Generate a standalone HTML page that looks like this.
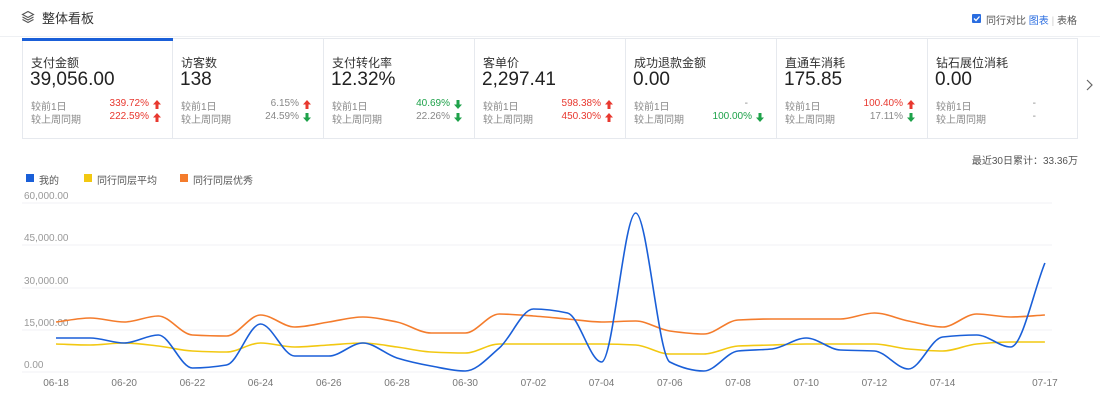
<!DOCTYPE html>
<html><head><meta charset="utf-8"><style>
*{margin:0;padding:0;box-sizing:border-box}
body{width:1100px;height:414px;background:#fff;font-family:"Liberation Sans","Noto Sans CJK SC",sans-serif;color:#333;position:relative;overflow:hidden}
.abs{position:absolute}
.card{position:absolute;top:38px;height:101px;width:151px;border:1px solid #e6e9ee;border-left:none;background:#fff}
.card .t{position:absolute;left:8px;top:15px;font-size:12px;color:#333}
.card .v{position:absolute;left:7px;top:30px;font-size:19px;color:#222}
.card .r{position:absolute;left:8px;font-size:10px;color:#888;width:130px}
.card .r span.p{position:absolute;right:12px}
.card .r svg{position:absolute;right:0;top:2px}
.red{color:#e8382f}.grn{color:#1ea24a}
.lbl{position:absolute;font-size:10px;color:#999}
.xl{position:absolute;top:378px;font-size:10px;color:#777;width:40px;text-align:center}
</style></head><body>
<svg class="abs" style="left:21px;top:10px" width="14" height="14" viewBox="0 0 14 14" fill="none" stroke="#555" stroke-width="1.1"><path d="M7 1.5L12.5 4.5 7 7.5 1.5 4.5z"/><path d="M1.5 7L7 10 12.5 7"/><path d="M1.5 9.5L7 12.5 12.5 9.5"/></svg>
<div class="abs" style="left:42px;top:8px;font-size:13px;color:#333">整体看板</div>
<div class="abs" style="left:972px;top:14px;width:9px;height:9px;background:#2a6de0;border-radius:1px"></div>
<svg class="abs" style="left:972px;top:14px" width="9" height="9"><path d="M2 4.5L4 6.5 7.5 2.5" stroke="#fff" fill="none" stroke-width="1.3"/></svg>
<div class="abs" style="left:986px;top:12px;font-size:10px;color:#555">同行对比 <span style="color:#2a6de0">图表</span> <span style="color:#ccc">|</span> 表格</div>
<div class="abs" style="left:0;top:36px;width:1100px;height:1px;background:#eef0f3"></div>

<svg width="0" height="0" style="position:absolute"><defs>
<symbol id="up" viewBox="0 0 8 9"><path d="M4 0L8 4.5H5.5V9H2.5V4.5H0z"/></symbol>
<symbol id="dn" viewBox="0 0 8 9"><path d="M4 9L8 4.5H5.5V0H2.5V4.5H0z"/></symbol></defs></svg>

<div class="card" style="left:22px;border-left:1px solid #e6e9ee"><div class="abs" style="left:-1px;top:-1px;width:152px;height:3px;background:#1a5fd8"></div><div class="t">支付金额</div><div class="v">39,056.00</div>
<div class="r" style="top:59px">较前1日<span class="p red">339.72%</span><svg width="8" height="9" fill="#e8382f"><use href="#up"/></svg></div><div class="r" style="top:72px">较上周同期<span class="p red">222.59%</span><svg width="8" height="9" fill="#e8382f"><use href="#up"/></svg></div></div>
<div class="card" style="left:173px"><div class="t">访客数</div><div class="v">138</div>
<div class="r" style="top:59px">较前1日<span class="p">6.15%</span><svg width="8" height="9" fill="#e8382f"><use href="#up"/></svg></div><div class="r" style="top:72px">较上周同期<span class="p">24.59%</span><svg width="8" height="9" fill="#1ea24a"><use href="#dn"/></svg></div></div>
<div class="card" style="left:324px"><div class="t">支付转化率</div><div class="v">12.32%</div>
<div class="r" style="top:59px">较前1日<span class="p grn">40.69%</span><svg width="8" height="9" fill="#1ea24a"><use href="#dn"/></svg></div><div class="r" style="top:72px">较上周同期<span class="p">22.26%</span><svg width="8" height="9" fill="#1ea24a"><use href="#dn"/></svg></div></div>
<div class="card" style="left:475px"><div class="t">客单价</div><div class="v">2,297.41</div>
<div class="r" style="top:59px">较前1日<span class="p red">598.38%</span><svg width="8" height="9" fill="#e8382f"><use href="#up"/></svg></div><div class="r" style="top:72px">较上周同期<span class="p red">450.30%</span><svg width="8" height="9" fill="#e8382f"><use href="#up"/></svg></div></div>
<div class="card" style="left:626px"><div class="t">成功退款金额</div><div class="v">0.00</div>
<div class="r" style="top:59px">较前1日<span class="p" style="right:16px">-</span></div><div class="r" style="top:72px">较上周同期<span class="p grn">100.00%</span><svg width="8" height="9" fill="#1ea24a"><use href="#dn"/></svg></div></div>
<div class="card" style="left:777px"><div class="t">直通车消耗</div><div class="v">175.85</div>
<div class="r" style="top:59px">较前1日<span class="p red">100.40%</span><svg width="8" height="9" fill="#e8382f"><use href="#up"/></svg></div><div class="r" style="top:72px">较上周同期<span class="p">17.11%</span><svg width="8" height="9" fill="#1ea24a"><use href="#dn"/></svg></div></div>
<div class="card" style="left:928px;width:150px"><div class="t">钻石展位消耗</div><div class="v">0.00</div>
<div class="r" style="top:59px">较前1日<span class="p" style="right:30px">-</span></div><div class="r" style="top:72px">较上周同期<span class="p" style="right:30px">-</span></div></div>
<svg class="abs" style="left:1085px;top:78px" width="10" height="14"><path d="M2 2L7 7 2 12" stroke="#666" fill="none" stroke-width="1.2"/></svg>

<div class="abs" style="right:22px;top:152px;font-size:10px;color:#555">最近30日累计：33.36万</div>
<div class="abs" style="left:26px;top:174px;width:8px;height:8px;background:#1a5fd8"></div><div class="abs" style="left:39px;top:172px;font-size:10px;color:#555">我的</div>
<div class="abs" style="left:84px;top:174px;width:8px;height:8px;background:#f2c811"></div><div class="abs" style="left:97px;top:172px;font-size:10px;color:#555">同行同层平均</div>
<div class="abs" style="left:180px;top:174px;width:8px;height:8px;background:#f47c2c"></div><div class="abs" style="left:193px;top:172px;font-size:10px;color:#555">同行同层优秀</div>

<div class="lbl" style="left:24px;top:191px">60,000.00</div>
<div class="lbl" style="left:24px;top:233px">45,000.00</div>
<div class="lbl" style="left:24px;top:276px">30,000.00</div>
<div class="lbl" style="left:24px;top:318px">15,000.00</div>
<div class="lbl" style="left:24px;top:360px">0.00</div>
<div id="xl"></div>
<svg class="abs" style="left:0;top:0" width="1100" height="414" id="ch">
<g stroke="#f0f2f6" stroke-width="1"><line x1="22" y1="203" x2="1052" y2="203"/><line x1="22" y1="245" x2="1052" y2="245"/><line x1="22" y1="288" x2="1052" y2="288"/><line x1="22" y1="330" x2="1052" y2="330"/><line x1="22" y1="372" x2="1052" y2="372"/></g>
<path id="po" fill="none" stroke="#f47c2c" stroke-width="1.6"/>
<path id="py" fill="none" stroke="#f2c811" stroke-width="1.6"/>
<path id="pb" fill="none" stroke="#1a5fd8" stroke-width="1.6"/>
</svg>
<script>
var B=[338,338,343,335,368,365,324,356,356,343,358,366,371,348,309,313,362,213,362,371,351,349,338,350,351,369,337,335,347,263];
var O=[322,318,322,316,335,336,315,327,322,317,322,333,333,314,316,319,322,321,331,334,320,319,319,319,313,321,327,314,317,315];
var Y=[344,345,343,346,351,352,343,347,345,343,347,352,353,344,344,344,344,345,354,354,346,345,344,344,344,349,351,344,342,342];
var h0=34.1;
function X(i){return 56+h0*i}
function path(a){var n=a.length,d=[],m=[];
for(var i=0;i<n-1;i++)d.push((a[i+1]-a[i])/h0);
m[0]=d[0];m[n-1]=d[n-2];
for(var i=1;i<n-1;i++){if(d[i-1]*d[i]<=0)m[i]=0;else m[i]=2/(1/d[i-1]+1/d[i]);}
var s="M"+X(0)+","+a[0];
for(var i=0;i<n-1;i++){var dx=h0/3;s+=" C"+(X(i)+dx)+","+(a[i]+m[i]*dx)+" "+(X(i+1)-dx)+","+(a[i+1]-m[i+1]*dx)+" "+X(i+1)+","+a[i+1];}
return s}
document.getElementById("pb").setAttribute("d",path(B));
document.getElementById("po").setAttribute("d",path(O));
document.getElementById("py").setAttribute("d",path(Y));
var L=["06-18","06-20","06-22","06-24","06-26","06-28","06-30","07-02","07-04","07-06","07-08","07-10","07-12","07-14"],h="";
for(var i=0;i<L.length;i++){h+='<div class="xl" style="left:'+(X(2*i)-20)+'px">'+L[i]+'</div>'}
h+='<div class="xl" style="left:'+(X(29)-20)+'px">07-17</div>';
document.getElementById("xl").innerHTML=h;
</script>
</body></html>
